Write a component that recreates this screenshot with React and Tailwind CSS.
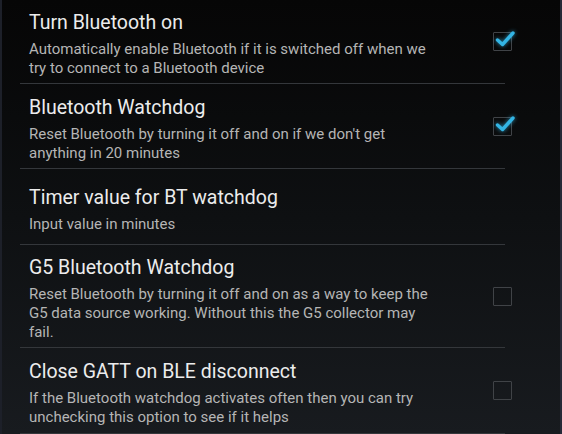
import React from "react";

const prefs = [
  {
    title: "Turn Bluetooth on",
    lines: ["Automatically enable Bluetooth if it is switched off when we", "try to connect to a Bluetooth device"],
    checked: true,
    h: "h-[83px]",
  },
  {
    title: "Bluetooth Watchdog",
    lines: ["Reset Bluetooth by turning it off and on if we don't get", "anything in 20 minutes"],
    checked: true,
    h: "h-[84px]",
  },
  {
    title: "Timer value for BT watchdog",
    lines: ["Input value in minutes"],
    checked: null,
    h: "h-[75px]",
  },
  {
    title: "G5 Bluetooth Watchdog",
    lines: [
      "Reset Bluetooth by turning it off and on as a way to keep the",
      "G5 data source working. Without this the G5 collector may",
      "fail.",
    ],
    checked: false,
    h: "h-[102px]",
  },
  {
    title: "Close GATT on BLE disconnect",
    lines: ["If the Bluetooth watchdog activates often then you can try", "unchecking this option to see if it helps"],
    checked: false,
    h: "h-[85px]",
  },
];

function CheckBox({ checked }) {
  return (
    <div className="relative w-[19px] h-[19px] border-[1.5px] border-[#404347] rounded-[1px]">
      {checked && (
        <svg
          className="absolute -top-[3px] -left-[1px] w-[24px] h-[20px]"
          viewBox="0 0 24 20"
          style={{ filter: "drop-shadow(0 0 2px rgba(51,181,229,0.75))" }}
        >
          <path d="M4.5 10 L9.5 14.5 L20 3" fill="none" stroke="#33b5e5" strokeWidth="3.4" strokeLinecap="round" strokeLinejoin="round" />
        </svg>
      )}
    </div>
  );
}

export default function App() {
  return (
    <div
      className="w-[562px] h-[434px] overflow-hidden bg-gradient-to-b from-[#060606] via-[#0e1012] to-[#181b1f] border-l-2 border-l-[#1d2029] border-r-2 border-r-[#262a38]"
      style={{ fontFamily: "Roboto, 'Liberation Sans', sans-serif" }}
    >
      {prefs.map((p, i) => (
        <div key={i}>
          <div className={`${p.h} flex items-center`}>
            <div className="flex-1 pl-[27px] pt-[4px]">
              <div className="text-[19.5px] leading-[27px] text-[#ececec]">{p.title}</div>
              <div className="text-[15px] leading-[19px] text-[#b5b5b5] mt-[4px]">
                {p.lines.map((l, j) => (
                  <div key={j}>{l}</div>
                ))}
              </div>
            </div>
            <div className="w-[67px] flex justify-start">
              {p.checked !== null && <CheckBox checked={p.checked} />}
            </div>
          </div>
          <div className="ml-[18px] w-[485px] h-px bg-[#34373b]" />
        </div>
      ))}
    </div>
  );
}
